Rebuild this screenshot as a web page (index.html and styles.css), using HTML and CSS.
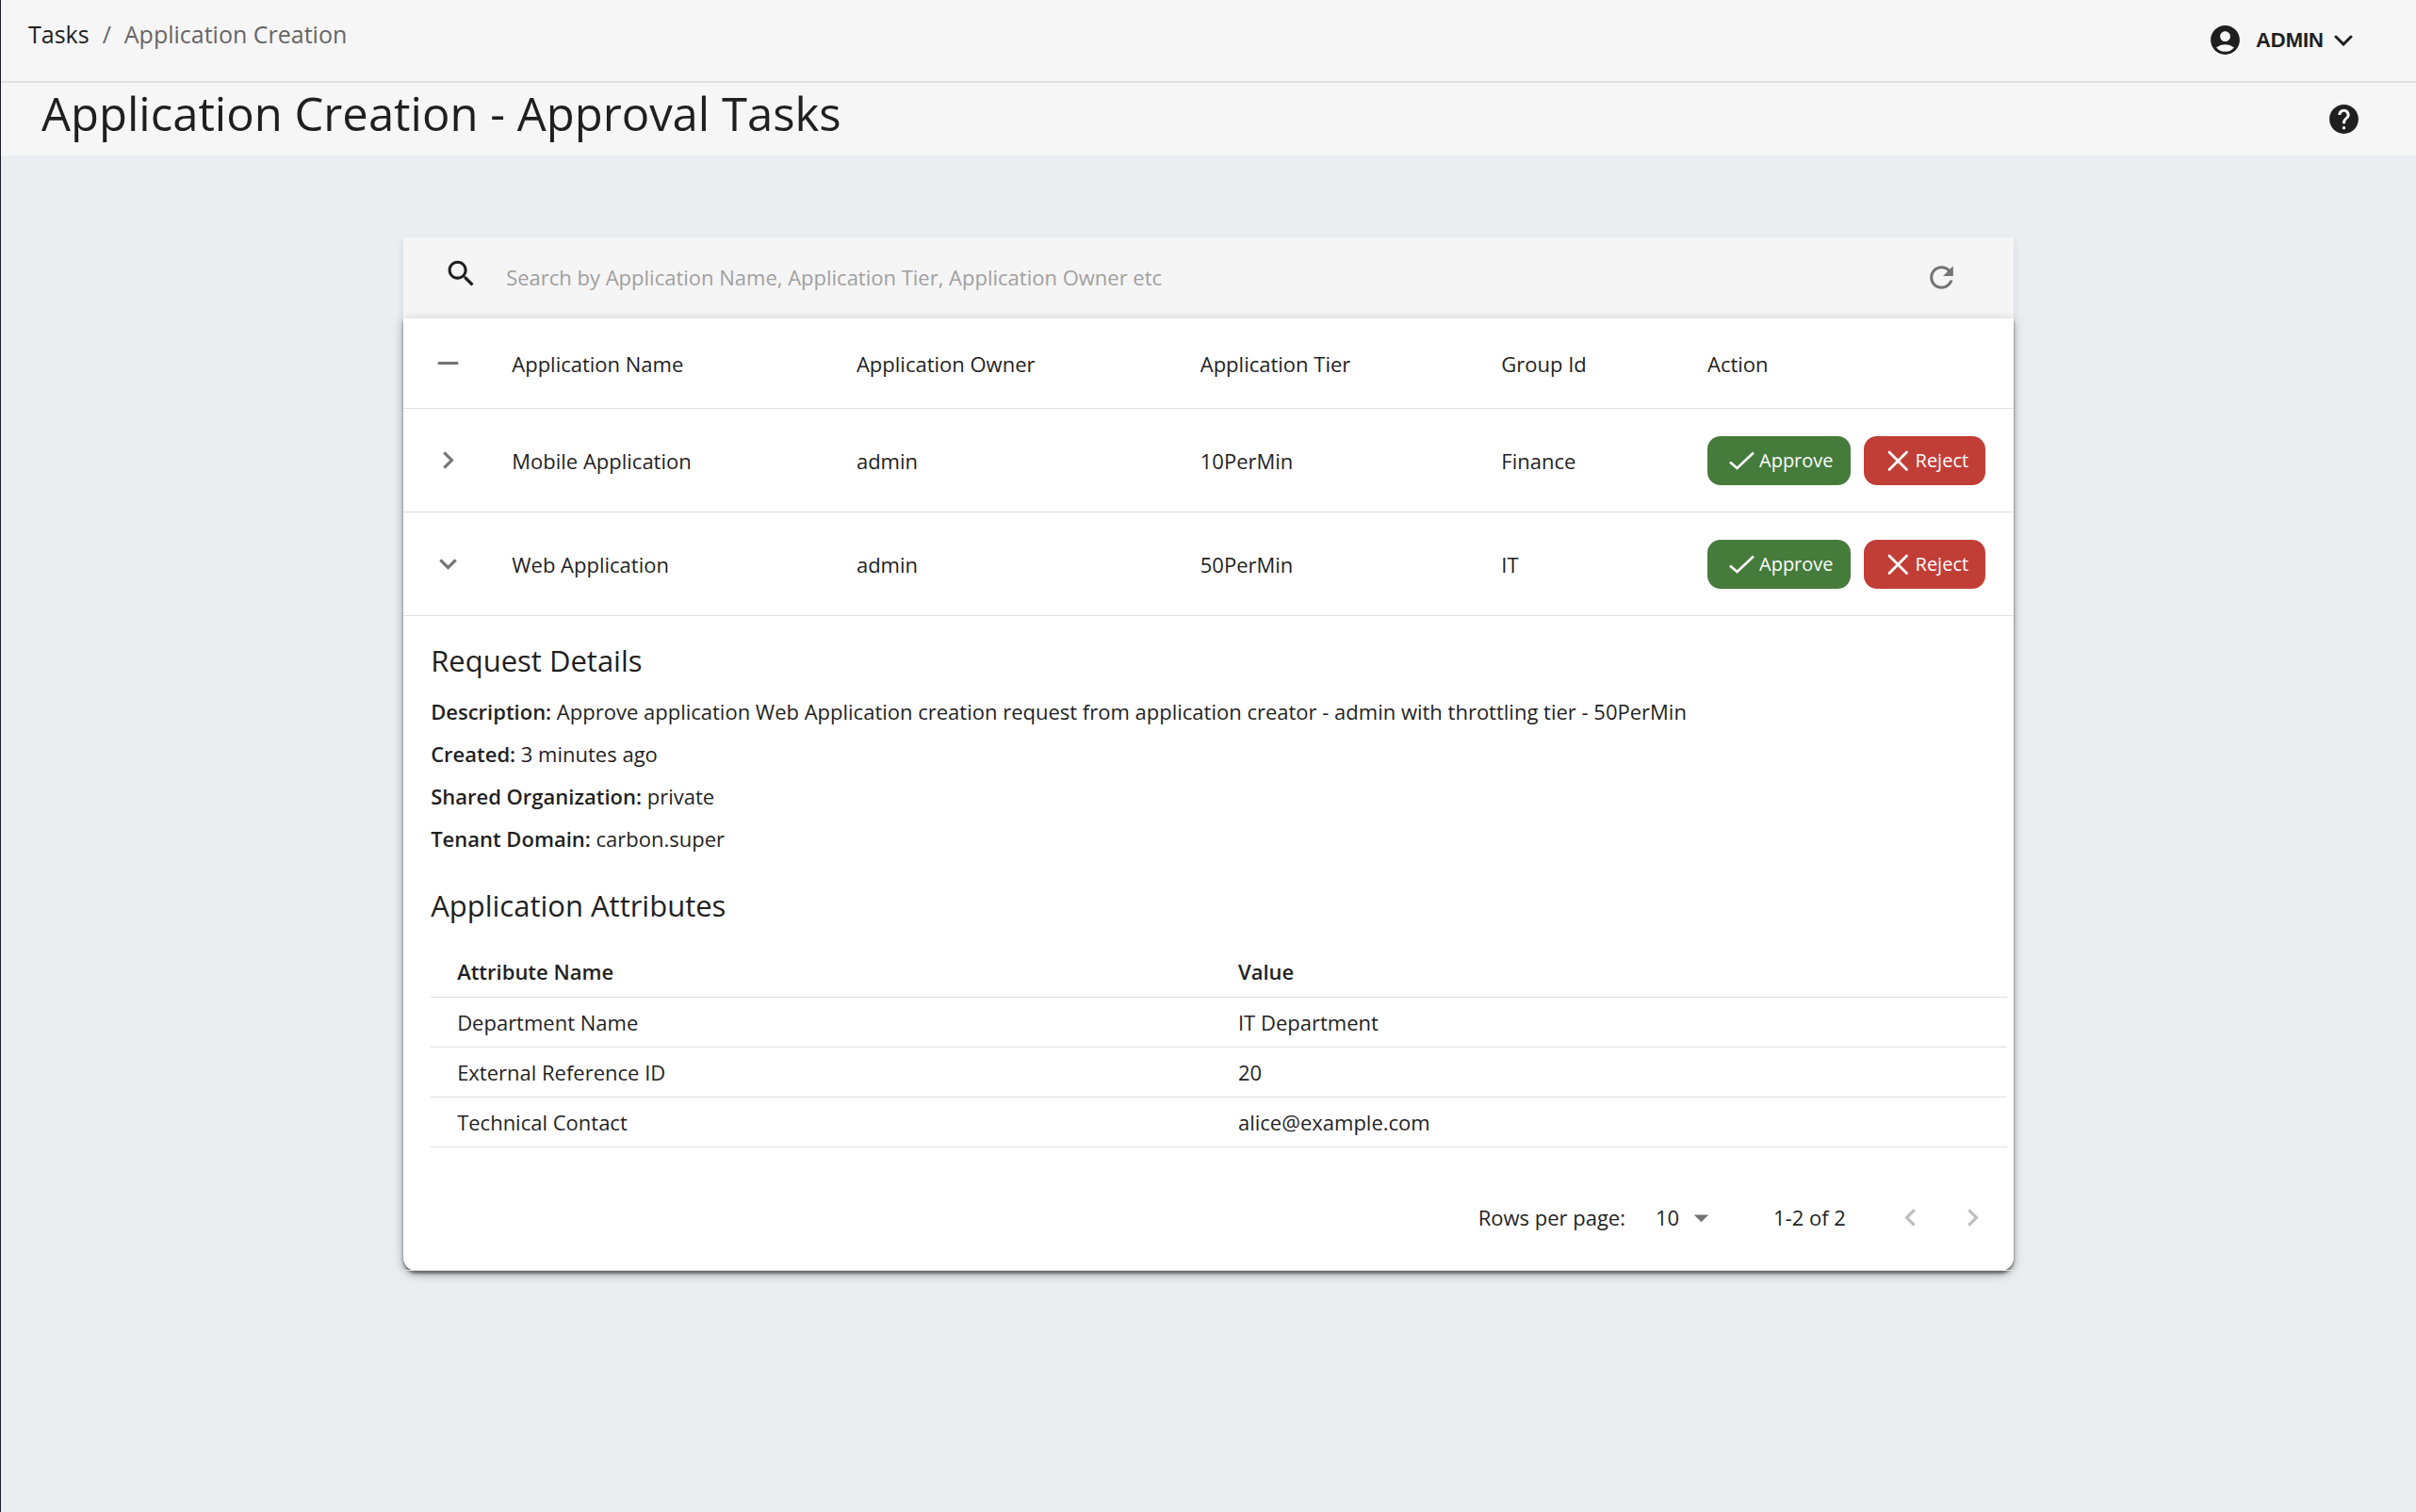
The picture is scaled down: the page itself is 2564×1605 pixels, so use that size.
FILE: index.html
```html
<!DOCTYPE html>
<html lang="en">
<head>
<meta charset="utf-8">
<meta name="viewport" content="width=device-width, initial-scale=1">
<title>Application Creation - Approval Tasks</title>
<link rel="stylesheet" href="styles.css">
</head>
<body>
<svg class="sprite" aria-hidden="true">
  <symbol id="chevron-right" viewBox="0 0 24 24"><path d="M10 6 8.59 7.41 13.17 12l-4.58 4.59L10 18l6-6z"/></symbol>
  <symbol id="chevron-left" viewBox="0 0 24 24"><path d="M15.41 7.41 14 6l-6 6 6 6 1.41-1.41L10.83 12z"/></symbol>
  <symbol id="chevron-down" viewBox="0 0 24 24"><path d="M16.59 8.59 12 13.17 7.41 8.59 6 10l6 6 6-6z"/></symbol>
  <symbol id="check" viewBox="0 0 28 28"><path d="M2 15.500 9.500 22 27 5.500" fill="none" stroke="currentColor" stroke-width="2.600"/></symbol>
  <symbol id="cross" viewBox="0 0 28 28"><path d="M5 5 23.500 23.500M23.500 5 5 23.500" fill="none" stroke="currentColor" stroke-width="2.800" stroke-linecap="round"/></symbol>
</svg>
<header class="topbar">
  <nav class="breadcrumb" aria-label="Breadcrumb">
    <a class="breadcrumb-link" href="#tasks">Tasks</a>
    <span>/</span>
    <span>Application Creation</span>
  </nav>
  <button class="user-menu" type="button">
    <svg class="icon" viewBox="0 0 24 24" aria-hidden="true"><path d="M12 2C6.480 2 2 6.480 2 12s4.480 10 10 10 10-4.480 10-10S17.520 2 12 2zm0 4c1.930 0 3.500 1.570 3.500 3.500S13.930 13 12 13s-3.500-1.570-3.500-3.500S10.070 6 12 6zm0 14c-2.030 0-4.430-.82-6.140-2.880C7.550 15.800 9.680 15 12 15s4.450.8 6.140 2.120C16.430 19.180 14.030 20 12 20z"/></svg>
    <span>ADMIN</span>
    <svg class="user-caret" viewBox="0 0 20 12" aria-hidden="true"><path d="M2 2l8 8 8-8" fill="none" stroke="currentColor" stroke-width="3" stroke-linecap="round"/></svg>
  </button>
</header>
<div class="titlebar">
  <h1 class="page-title">Application Creation - Approval Tasks</h1>
  <button class="icon-button" type="button" aria-label="Help">
    <svg class="icon" viewBox="0 0 24 24" aria-hidden="true"><path d="M12 2C6.480 2 2 6.480 2 12s4.480 10 10 10 10-4.480 10-10S17.520 2 12 2zm1 17h-2v-2h2v2zm2.070-7.750-.9.920C13.450 12.900 13 13.500 13 15h-2v-.5c0-1.100.45-2.100 1.170-2.830l1.240-1.260c.37-.36.59-.86.59-1.410 0-1.100-.9-2-2-2s-2 .9-2 2H8c0-2.210 1.790-4 4-4s4 1.790 4 4c0 .88-.36 1.680-.93 2.250z"/></svg>
  </button>
</div>
<main class="content">
  <section class="card">
    <form class="search">
      <svg class="icon search-icon" viewBox="0 0 24 24" aria-hidden="true"><path d="M15.500 14h-.79l-.28-.27C15.410 12.590 16 11.110 16 9.500 16 5.910 13.090 3 9.500 3S3 5.910 3 9.500 5.910 16 9.500 16c1.610 0 3.090-.59 4.230-1.570l.27.28v.79l5 4.990L20.490 19l-4.990-5zm-6 0C7.010 14 5 11.990 5 9.500S7.010 5 9.500 5 14 7.010 14 9.500 11.990 14 9.500 14z"/></svg>
      <input class="search-input" type="text" aria-label="Search" placeholder="Search by Application Name, Application Tier, Application Owner etc">
      <button class="icon-button muted" type="button" aria-label="Reload">
        <svg class="icon" viewBox="0 0 24 24" aria-hidden="true"><path d="M17.650 6.350C16.200 4.900 14.210 4 12 4c-4.420 0-7.990 3.580-7.990 8s3.570 8 7.990 8c3.730 0 6.840-2.550 7.730-6h-2.080c-.82 2.330-3.040 4-5.650 4-3.310 0-6-2.690-6-6s2.690-6 6-6c1.660 0 3.140.69 4.220 1.780L13 11h7V4l-2.350 2.350z"/></svg>
      </button>
    </form>
    <div class="paper">
      <table class="tasks">
        <colgroup><col class="col-toggle"><col class="col-name"><col class="col-owner"><col class="col-tier"><col class="col-group"><col></colgroup>
        <thead>
          <tr class="task-head">
            <th class="toggle"><button class="icon-button muted" type="button" aria-label="Collapse all"><svg class="icon" viewBox="0 0 24 24" aria-hidden="true"><path d="M19 13H5v-2h14v2z"/></svg></button></th>
            <th>Application Name</th><th>Application Owner</th><th>Application Tier</th><th>Group Id</th><th>Action</th>
          </tr>
        </thead>
        <tbody>
          <tr class="task-row">
            <td class="toggle"><button class="icon-button muted" type="button" aria-label="Expand"><svg class="icon" aria-hidden="true"><use href="#chevron-right"/></svg></button></td>
            <td>Mobile Application</td><td>admin</td><td>10PerMin</td><td>Finance</td>
            <td><div class="actions">
              <button class="action approve" type="button"><svg class="action-icon" aria-hidden="true"><use href="#check"/></svg>Approve</button>
              <button class="action reject" type="button"><svg class="action-icon" aria-hidden="true"><use href="#cross"/></svg>Reject</button>
            </div></td>
          </tr>
          <tr class="task-row">
            <td class="toggle"><button class="icon-button muted" type="button" aria-label="Collapse"><svg class="icon" aria-hidden="true"><use href="#chevron-down"/></svg></button></td>
            <td>Web Application</td><td>admin</td><td>50PerMin</td><td>IT</td>
            <td><div class="actions">
              <button class="action approve" type="button"><svg class="action-icon" aria-hidden="true"><use href="#check"/></svg>Approve</button>
              <button class="action reject" type="button"><svg class="action-icon" aria-hidden="true"><use href="#cross"/></svg>Reject</button>
            </div></td>
          </tr>
        </tbody>
      </table>
      <div class="details">
        <h2 class="section-title">Request Details</h2>
        <div class="facts">
          <p><b>Description:</b> Approve application Web Application creation request from application creator - admin with throttling tier - 50PerMin</p>
          <p><b>Created:</b> 3 minutes ago</p>
          <p><b>Shared Organization:</b> private</p>
          <p><b>Tenant Domain:</b> carbon.super</p>
        </div>
        <h2 class="section-title">Application Attributes</h2>
        <table class="attributes">
          <colgroup><col class="col-attribute"><col></colgroup>
          <thead><tr><th>Attribute Name</th><th>Value</th></tr></thead>
          <tbody>
            <tr><td>Department Name</td><td>IT Department</td></tr>
            <tr><td>External Reference ID</td><td>20</td></tr>
            <tr><td>Technical Contact</td><td>alice@example.com</td></tr>
          </tbody>
        </table>
      </div>
      <footer class="pager">
        <label for="rows">Rows per page:</label>
        <span class="rows-select">
          <select id="rows"><option>10</option><option>20</option><option>50</option></select>
          <svg class="icon select-arrow" viewBox="0 0 24 24" aria-hidden="true"><path d="m7 10 5 5 5-5z"/></svg>
        </span>
        <span class="range">1-2 of 2</span>
        <button class="icon-button page-button" type="button" aria-label="Previous page" disabled><svg class="icon" aria-hidden="true"><use href="#chevron-left"/></svg></button>
        <button class="icon-button page-button" type="button" aria-label="Next page" disabled><svg class="icon" aria-hidden="true"><use href="#chevron-right"/></svg></button>
      </footer>
    </div>
  </section>
</main>
</body>
</html>
```
FILE: styles.css
```css
* { box-sizing: border-box; }

body {
  margin: 0;
  min-height: 100vh;
  border-left: 1px solid #1c1c2b;
  background: #eaeef1;
  color: #1f1f1f;
  font: 22px/32px "Open Sans", "Noto Sans", sans-serif;
}

button, input, select { font: inherit; color: inherit; }

button {
  padding: 0;
  border: 0;
  background: none;
  cursor: pointer;
}

h1, h2, p { margin: 0; font-weight: 400; }

.sprite { display: none; }

.icon {
  display: block;
  width: 37px;
  height: 37px;
  fill: currentColor;
}

.icon-button { display: block; }
.muted { color: #757575; }

/* Header */
.topbar {
  display: flex;
  align-items: flex-start;
  justify-content: space-between;
  height: 88px;
  padding: 20px 67px 0 29px;
  border-bottom: 2px solid #e0e0e0;
  background: #f6f6f6;
}

.breadcrumb {
  display: flex;
  gap: 14px;
  color: #666;
  font-size: 25px;
}

.breadcrumb-link { color: #1f1f1f; text-decoration: none; }

.user-menu {
  display: flex;
  align-items: center;
  padding-top: 4px;
  font: bold 22px/32px "Liberation Sans", Arial, sans-serif;
}

.user-menu span { margin: 0 11px 0 14px; }
.user-caret { width: 20px; height: 12px; }

.titlebar {
  display: flex;
  align-items: center;
  justify-content: space-between;
  height: 77px;
  padding: 0 58px 0 43px;
  background: #f6f6f6;
}

.page-title { padding-bottom: 14px; font-size: 49px; line-height: 60px; }

/* Card */
.content { padding: 87px 0; }

.card {
  width: 66.67%;
  margin: 0 auto;
  border-radius: 0 0 14px 14px;
  box-shadow: 0 4px 8px rgba(0, 0, 0, .1);
}

.search {
  display: flex;
  align-items: center;
  height: 86px;
  padding: 0 58px 2px 43px;
  background: #f5f5f5;
}

.search-icon { margin-bottom: 8px; }

.search-input {
  flex: 1;
  margin: 0 29px;
  padding: 0;
  border: 0;
  outline: 0;
  background: none;
}

.search-input::placeholder { color: #a0a0a0; opacity: 1; }

.paper {
  border-radius: 0 0 14px 14px;
  background: #fff;
  box-shadow: 0 3px 3px rgba(0, 0, 0, .42), 0 3px 12px rgba(0, 0, 0, .25);
}

table {
  width: 100%;
  border-spacing: 0;
  table-layout: fixed;
  text-align: left;
}

th, td {
  padding: 0 28px;
  border-bottom: 1px solid #e0e0e0;
  font-weight: 400;
}

.tasks .toggle { padding: 0 0 0 29px; }
.tasks td:last-child { padding-right: 0; }
.col-toggle { width: 5.1%; }
.col-name { width: 21.4%; }
.col-owner { width: 21.35%; }
.col-tier { width: 18.7%; }
.col-group { width: 12.8%; }
.task-head { height: 96px; }
.task-row { height: 110px; }

.actions { display: flex; gap: 14px; }

.action {
  display: flex;
  align-items: center;
  gap: 5px;
  height: 52px;
  padding: 0 18px 0 22px;
  border-radius: 14px;
  color: #fff;
  font-size: 20px;
}

.approve { background: #457b3b; }
.reject { background: #c13e37; }
.action-icon { width: 28px; height: 28px; }

/* Expanded request */
.details { padding: 27px 7px 0 29px; }
.section-title { font-size: 31px; line-height: 40px; }

.facts {
  display: grid;
  gap: 13px;
  margin: 18px 0 35px;
}

.facts b, .attributes th { font-weight: 600; }

.attributes { margin-top: 22px; }
.attributes th { height: 56px; }
.attributes td { height: 53px; }
.col-attribute { width: 49.55%; }

/* Pagination */
.pager {
  display: flex;
  align-items: center;
  justify-content: flex-end;
  height: 131px;
  padding: 18px 25px 0 0;
  border-bottom: 1px solid #e0e0e0;
}

.rows-select {
  display: grid;
  margin: 0 58px 0 32px;
}

.rows-select select {
  grid-area: 1 / 1;
  width: 67px;
  padding: 0;
  border: 0;
  appearance: none;
  background: none;
}

.select-arrow {
  grid-area: 1 / 1;
  justify-self: end;
  align-self: center;
  color: #757575;
  pointer-events: none;
}

.range { margin-right: 50px; }
.page-button { color: #bdbdbd; }
.page-button + .page-button { margin-left: 29px; }
```
